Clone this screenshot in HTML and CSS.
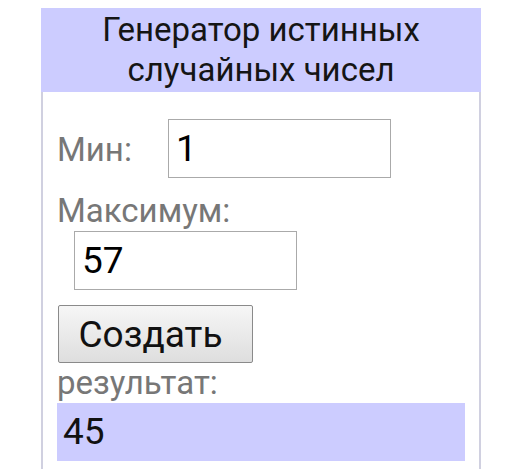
FILE: index.html
```html
<!DOCTYPE html>
<html lang="ru">
<head>
<meta charset="utf-8">
<link rel="stylesheet" href="styles.css">
</head>
<body>
<div class="widget">
  <div class="title">Генератор истинных случайных чисел</div>
  <div class="panel">
    <div class="row-min">
      <span class="label label-min">Мин:</span>
      <input class="field" type="text" value="1">
    </div>
    <div class="label">Максимум:</div>
    <input class="field field-max" type="text" value="57">
    <div class="btn-row"><button class="btn">Создать</button></div>
    <div class="label">результат:</div>
    <div class="result">45</div>
  </div>
</div>
</body>
</html>
```

FILE: styles.css
```css
html, body {
  margin: 0;
  padding: 0;
  background: #fff;
}
body {
  padding: 8px 0 0 41px;
  font-family: Roboto, "Noto Sans", sans-serif;
  font-size: 33px;
  line-height: 40px;
  color: #111;
}
.widget {
  width: 440px;
}
.title {
  background: #ccccff;
  text-align: center;
  padding: 2px 20px;
  color: #151515;
}
.panel {
  border-left: 2px solid #d0d0e0;
  border-right: 2px solid #d0d0e0;
  padding: 27px 14px 8px;
}
.row-min {
  display: flex;
  align-items: baseline;
  margin-bottom: 13px;
}
.label {
  color: #777;
}
.label-min {
  width: 111px;
  flex: none;
}
.field {
  box-sizing: border-box;
  width: 223px;
  height: 59px;
  border: 1px solid #aaa;
  border-radius: 0;
  padding: 0 7px;
  margin: 0;
  font-family: Roboto, "Noto Sans", sans-serif;
  font-size: 37px;
  color: #000;
  background: #fff;
  display: block;
}
.field-max {
  margin-left: 17px;
}
.btn-row {
  margin-top: 15px;
  padding-left: 1px;
}
.btn {
  box-sizing: border-box;
  width: 195px;
  height: 58px;
  border: 1px solid #8a8a8a;
  border-radius: 2px;
  background: linear-gradient(#f6f6f6, #dedede);
  font-family: Roboto, "Noto Sans", sans-serif;
  font-size: 37px;
  color: #111;
  padding: 0 10px 0 0;
  margin: 0;
  display: block;
}
.result {
  background: #ccccff;
  height: 58px;
  box-sizing: border-box;
  padding: 9px 6px;
  font-size: 37px;
  color: #111;
}
```
